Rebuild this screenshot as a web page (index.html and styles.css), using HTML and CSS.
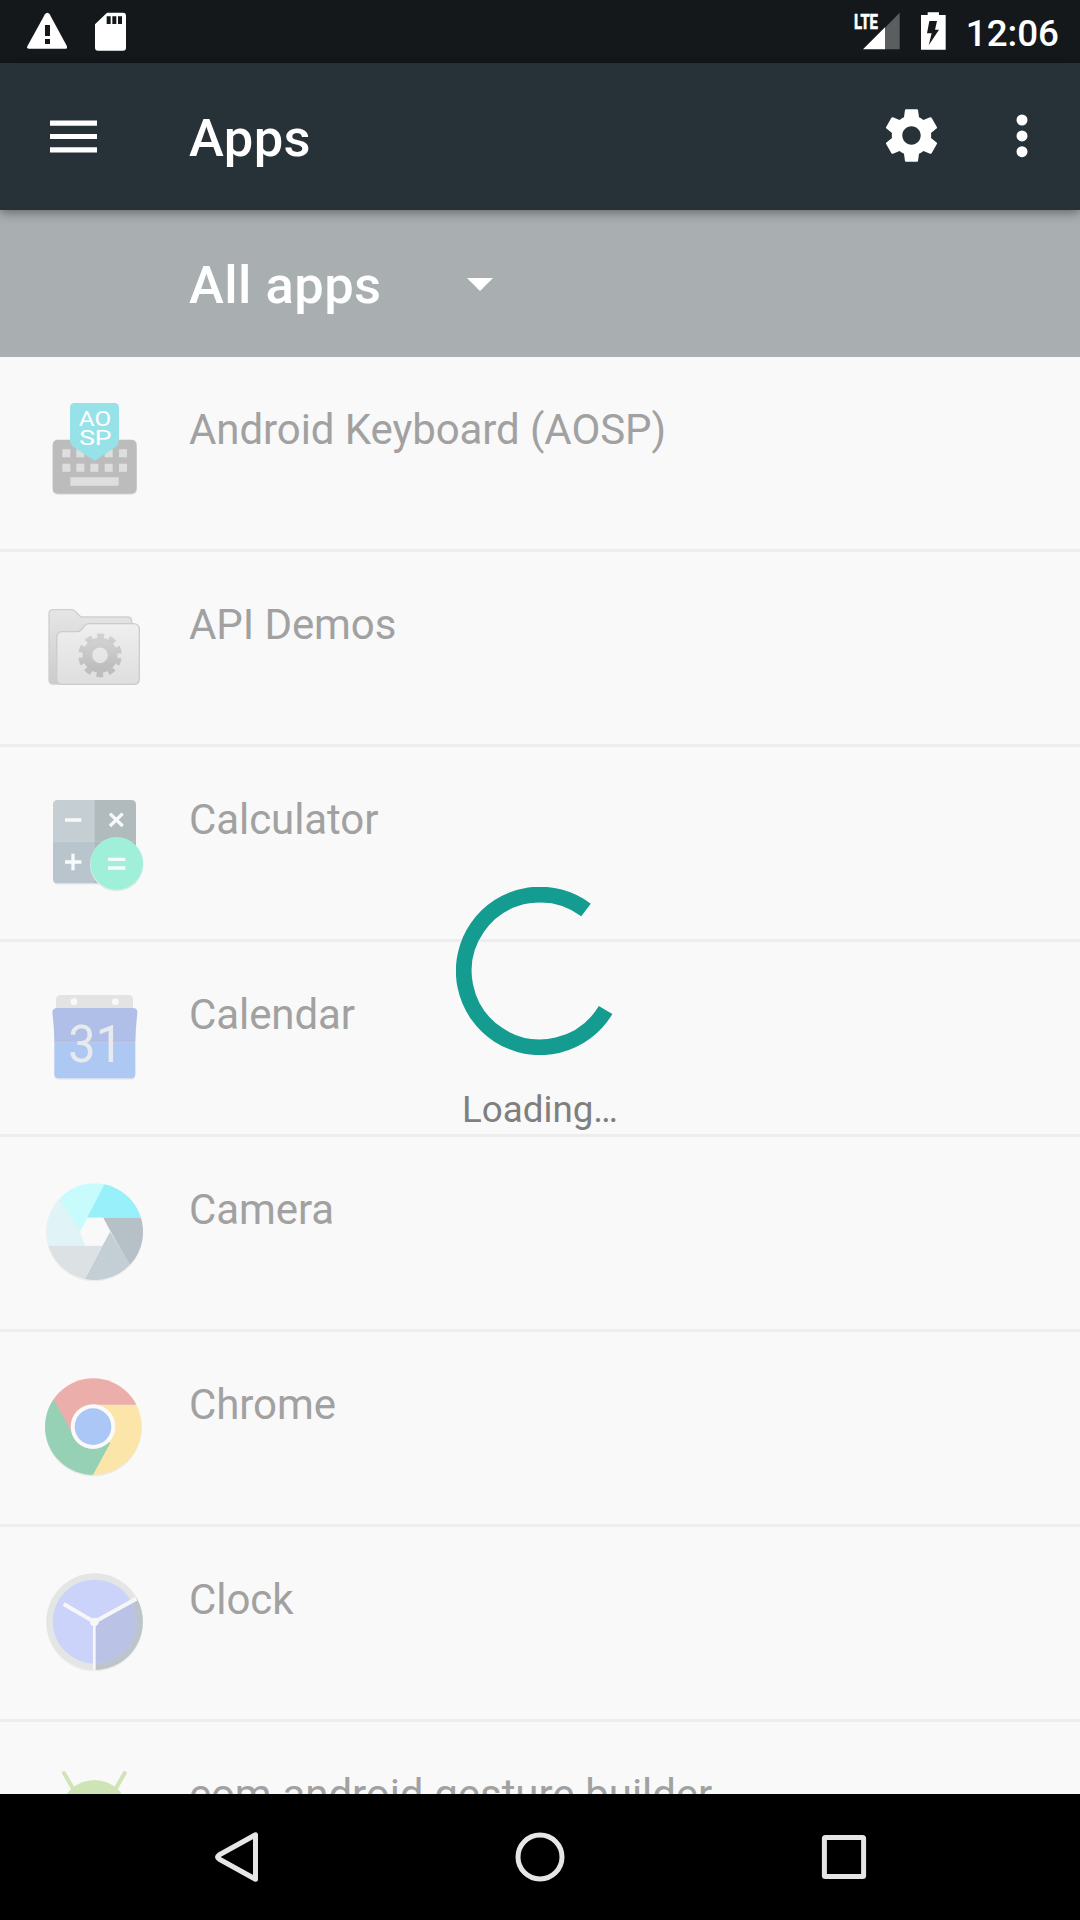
FILE: index.html
```html
<!DOCTYPE html>
<html lang="en">
<head>
<meta charset="utf-8">
<title>Apps</title>
<link rel="stylesheet" href="styles.css">
</head>
<body>
<div class="screen">
  <header class="status-bar">
    <div class="status-left">
      <svg class="ic-warning" viewBox="81 36 121 120"><path fill="#fff" d="M142 38q4 0 7 5l52 96q3 7-4 7H86q-7 0-4-7l53-96q3-5 7-5z"/><path fill="#14181a" d="M135 75h15v33h-15zM135 117h15v15h-15z"/></svg>
      <svg class="ic-sd" viewBox="285 36 93 120"><path fill="#fff" d="M321 38h48q9 0 9 9v96q0 9-9 9h-75q-9 0-9-9V73z"/><path fill="#14181a" d="M320 49h12v23h-12zM337 49h12v23h-12zM354 49h12v23h-12z"/></svg>
    </div>
    <div class="status-right">
      <svg class="ic-signal" viewBox="105 36 138 120"><path fill="#5b5e5f" d="M197 84l45-46v110h-45z"/><path fill="#fff" d="M132 148l66-66v66z"/><text class="lte" x="105" y="87" textLength="72" lengthAdjust="spacingAndGlyphs">LTE</text></svg>
      <svg class="ic-battery" viewBox="305 36 74 120"><path fill="#fff" d="M325 37h34v8h20v104h-74V45h20z"/><path fill="#14181a" d="M330 63h23l-6 26h12l-31 47 9-36h-14z"/></svg>
      <span class="clock">12:06</span>
    </div>
  </header>

  <div class="toolbar">
    <svg class="ic-menu" viewBox="0 0 48 33"><path fill="#fff" d="M0 .5h47v5.3H0zM0 13.9h47v5.2H0zM0 27.2h47v5.2H0z"/></svg>
    <h1 class="title">Apps</h1>
    <svg class="ic-gear" viewBox="0 0 24 24"><path fill="#fff" d="M19.43 12.98c.04-.32.07-.64.07-.98s-.03-.66-.07-.98l2.11-1.65c.19-.15.24-.42.12-.64l-2-3.46c-.12-.22-.39-.3-.61-.22l-2.49 1c-.52-.4-1.08-.73-1.69-.98l-.38-2.65C14.46 2.18 14.25 2 14 2h-4c-.25 0-.46.18-.49.42l-.38 2.65c-.61.25-1.17.59-1.69.98l-2.49-1c-.23-.09-.49 0-.61.22l-2 3.46c-.13.22-.07.49.12.64l2.11 1.65c-.04.32-.07.65-.07.98s.03.66.07.98l-2.11 1.65c-.19.15-.24.42-.12.64l2 3.46c.12.22.39.3.61.22l2.49-1c.52.4 1.08.73 1.69.98l.38 2.65c.03.24.24.42.49.42h4c.25 0 .46-.18.49-.42l.38-2.65c.61-.25 1.17-.59 1.69-.98l2.49 1c.23.09.49 0 .61-.22l2-3.46c.12-.22.07-.49-.12-.64l-2.11-1.65zM12 15.5c-1.93 0-3.5-1.57-3.5-3.5s1.57-3.5 3.5-3.5 3.5 1.57 3.5 3.5-1.57 3.5-3.5 3.5z"/></svg>
    <svg class="ic-more" viewBox="0 0 12 44"><g fill="#fff"><circle cx="6" cy="6" r="5.5"/><circle cx="6" cy="21.9" r="5.5"/><circle cx="6" cy="37.7" r="5.5"/></g></svg>
  </div>

  <div class="filter">
    <span class="filter-label">All apps</span>
    <svg class="ic-caret" viewBox="0 0 26 13"><path fill="#fff" d="M0 0h26L13 13z"/></svg>
  </div>

  <main class="content">
    <ul class="list">
      <li class="row">
        <svg class="app-icon" viewBox="0 0 390 360">
          <rect x="68" y="153" width="252" height="162" rx="15" fill="#e6e6e6"/>
          <rect x="68" y="149" width="252" height="162" rx="15" fill="#bcbcbc"/>
          <path fill="#dedede" d="M97 178h24v24H97zM139 178h24v24h-24zM224 178h24v24h-24zM267 178h24v24h-24zM97 221h24v24H97zM139 221h24v24h-24zM181 221h24v24h-24zM224 221h24v24h-24zM267 221h24v24h-24zM121 262h145v25H121z"/>
          <path fill="#97e2e8" d="M134 39h119q14 0 14 14v94q0 14-9 23l-64 42-65-42q-9-9-9-23V53q0-14 14-14z"/>
          <text class="aosp" x="195" y="109" textLength="97" lengthAdjust="spacingAndGlyphs">AO</text>
          <text class="aosp" x="196" y="166" textLength="97" lengthAdjust="spacingAndGlyphs">SP</text>
        </svg>
        <span class="name">Android Keyboard (AOSP)</span>
      </li>
      <li class="row">
        <svg class="app-icon" viewBox="0 -15 390 360">
          <defs>
            <linearGradient id="fold" x1="0" y1="0" x2="0" y2="1"><stop offset="0" stop-color="#efefef"/><stop offset="1" stop-color="#dedede"/></linearGradient>
            <linearGradient id="back" x1="0" y1="0" x2="0" y2="1"><stop offset="0" stop-color="#e6e6e6"/><stop offset="1" stop-color="#cbcbcb"/></linearGradient>
            <linearGradient id="cog" x1="0" y1="0" x2="0" y2="1"><stop offset="0" stop-color="#d0d0d0"/><stop offset="1" stop-color="#bdbdbd"/></linearGradient>
          </defs>
          <path fill="url(#back)" stroke="#cfcfcf" stroke-width="4" d="M70 59h55q6 0 10 5l18 17h140q12 0 12 13v188H70q-13 0-13-13V72q0-13 13-13z"/>
          <path fill="url(#fold)" stroke="#cccccc" stroke-width="4" d="M98 125h44q7 0 11-5l12-14q5-5 12-5h133q18 0 18 18v147q0 17-17 17H95q-15 0-15-16V143q0-18 18-18z"/>
          <circle cx="210" cy="196" r="38" fill="none" stroke="url(#cog)" stroke-width="29"/>
          <circle cx="210" cy="196" r="57" fill="none" stroke="url(#cog)" stroke-width="17" stroke-dasharray="20 15.814" stroke-dashoffset="-8"/>
        </svg>
        <span class="name">API Demos</span>
      </li>
      <li class="row">
        <svg class="app-icon" viewBox="0 -15 390 360">
          <rect x="69" y="50" width="249" height="249" rx="14" fill="#ebebeb"/>
          <path fill="#c5ced3" d="M83 45h110v125H69V59q0-14 14-14z"/><path fill="#b1babc" d="M193 45h111q14 0 14 14v111H193z"/><path fill="#b9c5cc" d="M69 170h124v125H83q-14 0-14-14z"/><path fill="#adb6b9" d="M193 170h125v125H193z"/>
          <circle cx="260" cy="239" r="80" fill="#dcece8"/><circle cx="260" cy="235" r="79" fill="#a0f0d9"/>
          <path fill="none" stroke="#f8fafa" stroke-width="10" d="M105 105h49M105 231h49M129 206v50M240 86l38 37M278 86l-38 37M234 223h52M234 249h52"/>
        </svg>
        <span class="name">Calculator</span>
      </li>
      <li class="row">
        <svg class="app-icon" viewBox="0 -15 390 360">
          <path fill="#e3e3e3" d="M92 45h203q14 0 14 14v50H78V59q0-14 14-14z"/><circle cx="132" cy="65" r="10" fill="#f8f8f8"/><circle cx="256" cy="65" r="10" fill="#f8f8f8"/>
          <path fill="#e6e8ee" d="M73 270h243v14q0 15-14 15H87q-14 0-14-15z"/>
          <path fill="#aec8f4" d="M73 188h243v93q0 14-14 14H87q-14 0-14-14z"/>
          <path fill="#b0bfe8" d="M82 84h226q15 0 14 15-5 42-6 89H73q0-47-6-89 0-15 15-15z"/>
          <text class="day" x="197" y="247" textLength="164" lengthAdjust="spacingAndGlyphs">31</text>
        </svg>
        <span class="name">Calendar</span>
      </li>
      <li class="row">
        <svg class="app-icon" viewBox="0 0 390 360">
          <defs><clipPath id="lens"><circle cx="194" cy="185" r="145"/></clipPath></defs>
          <circle cx="194" cy="189" r="145" fill="#ededed"/>
          <g clip-path="url(#lens)">
            <path fill="#e0f3f7" d="M40 227V100l48-23 82 150z"/>
            <path fill="#c8fcfc" d="M90 87L70 30h157l-2 13-74 142z"/>
            <path fill="#98f0fb" d="M171 143L225 40l130 0v103z"/>
            <path fill="#b6c0c7" d="M219 143h130v150l-50-8z"/>
            <path fill="#c4ced5" d="M240 185l61 100v60H150l14-16z"/>
            <path fill="#dce1e4" d="M40 227h176l-56 110H40z"/>
          </g>
          <path fill="#f9f9f9" d="M172 143h48l20 42-24 42h-50l-16-42z"/>
        </svg>
        <span class="name">Camera</span>
      </li>
      <li class="row">
        <svg class="app-icon" viewBox="0 0 390 360">
          <defs><clipPath id="disc"><circle cx="190" cy="185" r="145"/></clipPath></defs>
          <circle cx="190" cy="189" r="145" fill="#ebebeb"/>
          <g clip-path="url(#disc)">
            <path fill="#fbe5a9" d="M189 119h160v230H180l9-160z"/>
            <path fill="#97d1b5" d="M72 102L30 90v250h153l58-106-52-49-62 12z"/>
            <path fill="#ecaeaa" d="M72 104L60 30h290v89H189l-62 86z"/>
          </g>
          <circle cx="189" cy="185" r="67" fill="#fafafa"/><circle cx="189" cy="185" r="55" fill="#abc7f5"/>
        </svg>
        <span class="name">Chrome</span>
      </li>
      <li class="row">
        <svg class="app-icon" viewBox="0 0 390 360">
          <circle cx="194" cy="189" r="145" fill="#ededed"/>
          <circle cx="194" cy="185" r="145" fill="#e4e6e5"/>
          <path fill="#bdc5ca" d="M194 185l126-71a145 145 0 0 1-126 216z"/>
          <circle cx="194" cy="185" r="126" fill="#cbd3fb"/>
          <path fill="#bac2e6" d="M194 185l110-62a126 126 0 0 1-110 188z"/>
          <path fill="none" stroke="#f7f7f8" stroke-width="12" d="M101 132l92 54 126-70"/><path fill="none" stroke="#f7f7f8" stroke-width="8" d="M193 184v148"/><circle cx="193" cy="186" r="13" fill="#f7f7f8"/>
        </svg>
        <span class="name">Clock</span>
      </li>
      <li class="row">
        <svg class="app-icon" viewBox="0 0 390 360">
          <path fill="none" stroke="#d0e4b8" stroke-width="12" stroke-linecap="round" d="M102 54l26 46M284 54l-26 46"/>
          <path fill="#cee4b5" d="M92 175a101 100 0 0 1 202 0z"/>
        </svg>
        <span class="name">com.android.gesture.builder</span>
      </li>
    </ul>
    <div class="loading">
      <svg class="spinner" viewBox="-84 -84 168 168"><path fill="none" stroke="#159c90" stroke-width="15.8" d="M46-61A76.3 76.3 0 1 0 65.6 39"/></svg>
      <span class="loading-text">Loading…</span>
    </div>
  </main>

  <nav class="nav-bar">
    <svg class="nav-icon" viewBox="0 0 60 60"><path fill="none" stroke="#e6e6e6" stroke-width="5" stroke-linejoin="round" d="M49.5 7.8v44.4L13 32q-3-2 0-4z"/></svg>
    <svg class="nav-icon" viewBox="0 0 60 60"><circle cx="30" cy="30" r="22" fill="none" stroke="#e6e6e6" stroke-width="5"/></svg>
    <svg class="nav-icon" viewBox="0 0 60 60"><rect x="10.4" y="10.6" width="39.2" height="38.8" rx="1" fill="none" stroke="#e6e6e6" stroke-width="5"/></svg>
  </nav>
</div>
</body>
</html>
```
FILE: styles.css
```css
* { box-sizing: border-box; }

body {
  margin: 0;
  font-family: Roboto, "Noto Sans", sans-serif;
  background: #f9f9f9;
}

svg { display: block; flex: none; }

.screen {
  display: flex;
  flex-direction: column;
  width: 1080px;
  height: 1920px;
  overflow: hidden;
}

.status-bar {
  display: flex;
  justify-content: space-between;
  flex: none;
  height: 63px;
  padding: 12px 21px 0 27px;
  background: #14181a;
}

.status-left { display: flex; gap: 28px; }
.status-right { display: flex; }
.ic-warning { width: 40.3px; height: 40px; }
.ic-sd { width: 31px; height: 40px; }
.ic-signal { width: 46px; height: 40px; overflow: visible; }
.ic-battery { width: 24.7px; height: 40px; margin-left: 21px; }

.lte {
  font: bold 62px Roboto, sans-serif;
  fill: #fff;
  stroke: #fff;
  stroke-width: 2px;
}

.clock {
  margin-left: 20px;
  font-size: 36.75px;
  font-weight: 500;
  line-height: 43px;
  color: #fff;
}

.toolbar {
  position: relative;
  z-index: 1;
  display: flex;
  align-items: center;
  flex: none;
  height: 147px;
  padding: 0 52px 0 50px;
  background: #263238;
  box-shadow: 0 3px 10px rgba(0, 0, 0, 0.4);
}

.ic-menu { width: 48px; height: 33px; }

.title {
  flex: 1;
  margin: 3px 0 0 91px;
  font-size: 52.5px;
  font-weight: 500;
  line-height: 62px;
  letter-spacing: 0.4px;
  color: #fff;
}

.ic-gear { width: 63px; height: 63px; margin: 0 73px 2px 0; }
.ic-more { width: 12px; height: 44px; margin-bottom: 1px; }

.filter {
  display: flex;
  align-items: center;
  flex: none;
  height: 147px;
  padding-left: 189px;
  background: #a9afb1;
}

.filter-label {
  width: 278px;
  margin-top: 3px;
  font-size: 52.5px;
  font-weight: 500;
  line-height: 62px;
  letter-spacing: 0.45px;
  color: #fff;
}

.ic-caret { width: 26px; height: 13px; margin-top: 2px; }

.content {
  position: relative;
  flex: 1;
  min-height: 0;
  overflow: hidden;
}

.list { margin: 0; padding: 0; list-style: none; }

.row {
  display: flex;
  align-items: flex-start;
  gap: 29px;
  height: 195px;
  padding-left: 30px;
  border-bottom: 3px solid #ededed;
}

.app-icon { width: 130px; height: 120px; margin-top: 33px; }
.aosp { font: 62px Roboto, sans-serif; fill: #fff; text-anchor: middle; }
.day { font: 400 156px Roboto, sans-serif; fill: #e8eaed; text-anchor: middle; }

.name {
  margin-top: 48px;
  font-size: 42px;
  line-height: 49px;
  letter-spacing: -0.08px;
  color: #a1a1a1;
  white-space: nowrap;
}

.loading {
  position: absolute;
  inset: 530px 0 auto;
  display: flex;
  flex-direction: column;
  align-items: center;
}

.spinner { width: 168px; height: 168px; }

.loading-text {
  margin-top: 33px;
  font-size: 36.75px;
  line-height: 43px;
  color: #7f7f7f;
}

.nav-bar {
  display: flex;
  align-items: center;
  justify-content: center;
  gap: 244px;
  flex: none;
  height: 126px;
  background: #000;
}

.nav-icon { width: 60px; height: 60px; }
```
